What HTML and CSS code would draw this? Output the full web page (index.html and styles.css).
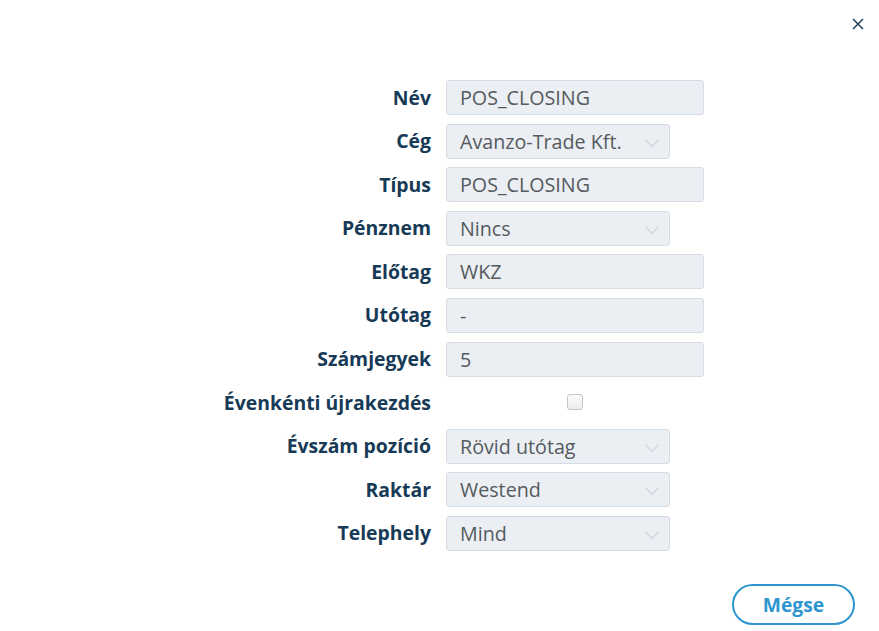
FILE: index.html
```html
<!DOCTYPE html>
<html lang="hu">
<head>
<meta charset="utf-8">
<title>Bizonylat</title>
<link rel="stylesheet" href="styles.css">
</head>
<body>
<div class="modal">
  <div class="modal-header">
    <button class="close" type="button" aria-label="Bezárás">
      <svg width="12" height="12" viewBox="0 0 12 12"><path d="M1 1L11 11M11 1L1 11" stroke="#1d3f5c" stroke-width="1.5" fill="none"/></svg>
    </button>
  </div>
  <form class="form">
    <label class="lbl">Név</label>
    <div class="field"><div class="input">POS_CLOSING</div></div>

    <label class="lbl">Cég</label>
    <div class="field"><div class="select">Avanzo-Trade Kft.<span class="chev"></span></div></div>

    <label class="lbl">Típus</label>
    <div class="field"><div class="input">POS_CLOSING</div></div>

    <label class="lbl">Pénznem</label>
    <div class="field"><div class="select">Nincs<span class="chev"></span></div></div>

    <label class="lbl">Előtag</label>
    <div class="field"><div class="input">WKZ</div></div>

    <label class="lbl">Utótag</label>
    <div class="field"><div class="input">-</div></div>

    <label class="lbl">Számjegyek</label>
    <div class="field"><div class="input">5</div></div>

    <label class="lbl">Évenkénti újrakezdés</label>
    <div class="field check-field"><span class="checkbox"></span></div>

    <label class="lbl">Évszám pozíció</label>
    <div class="field"><div class="select">Rövid utótag<span class="chev"></span></div></div>

    <label class="lbl">Raktár</label>
    <div class="field"><div class="select">Westend<span class="chev"></span></div></div>

    <label class="lbl">Telephely</label>
    <div class="field"><div class="select">Mind<span class="chev"></span></div></div>
  </form>
  <div class="modal-footer">
    <button class="btn" type="button">Mégse</button>
  </div>
</div>
</body>
</html>
```
FILE: styles.css
```css
html, body {
  margin: 0;
  padding: 0;
  background: #ffffff;
}
body {
  font-family: "Open Sans", "Noto Sans", sans-serif;
  width: 879px;
  height: 631px;
  overflow: hidden;
}
.modal {
  display: flex;
  flex-direction: column;
}
.modal-header {
  display: flex;
  justify-content: flex-end;
  padding: 18px 15px 0 0;
  height: 62px;
  box-sizing: border-box;
}
.close {
  border: 0;
  background: none;
  padding: 0;
  width: 12px;
  height: 12px;
  display: block;
  cursor: pointer;
}
.close svg { display: block; }
.form {
  display: grid;
  grid-template-columns: 431px 258px;
  column-gap: 15px;
  row-gap: 8.6px;
  align-items: center;
  margin-top: 18px;
}
.lbl {
  text-align: right;
  font-weight: 700;
  font-size: 19.4px;
  color: #173a56;
  white-space: nowrap;
  line-height: 24px;
}
.field {
  height: 35px;
  display: flex;
  align-items: center;
}
.input, .select {
  box-sizing: border-box;
  height: 35px;
  background: #ebeff3;
  border: 1px solid #d4dce4;
  border-radius: 3px;
  font-size: 19.7px;
  color: #555a5e;
  padding: 0 13px;
  display: flex;
  align-items: center;
  position: relative;
}
.input { width: 258px; }
.select { width: 224px; }
.chev {
  position: absolute;
  right: 12px;
  top: 10px;
  width: 9px;
  height: 9px;
  border-right: 1.5px solid #c9d1d9;
  border-bottom: 1.5px solid #c9d1d9;
  transform: rotate(45deg);
}
.check-field {
  justify-content: center;
}
.checkbox {
  width: 14px;
  height: 14px;
  border: 1px solid #c4c4c4;
  border-radius: 3px;
  background: linear-gradient(#fbfbfb, #ececec);
  box-sizing: content-box;
  margin-top: -2px;
}
.modal-footer {
  display: flex;
  justify-content: flex-end;
  padding: 33px 24px 0 0;
}
.btn {
  width: 123px;
  height: 41px;
  box-sizing: border-box;
  border: 2px solid #2d96cf;
  border-radius: 21px;
  background: #ffffff;
  color: #2d96cf;
  font-family: "Open Sans", "Noto Sans", sans-serif;
  font-weight: 700;
  font-size: 19.3px;
  padding: 0;
  cursor: pointer;
}
```
